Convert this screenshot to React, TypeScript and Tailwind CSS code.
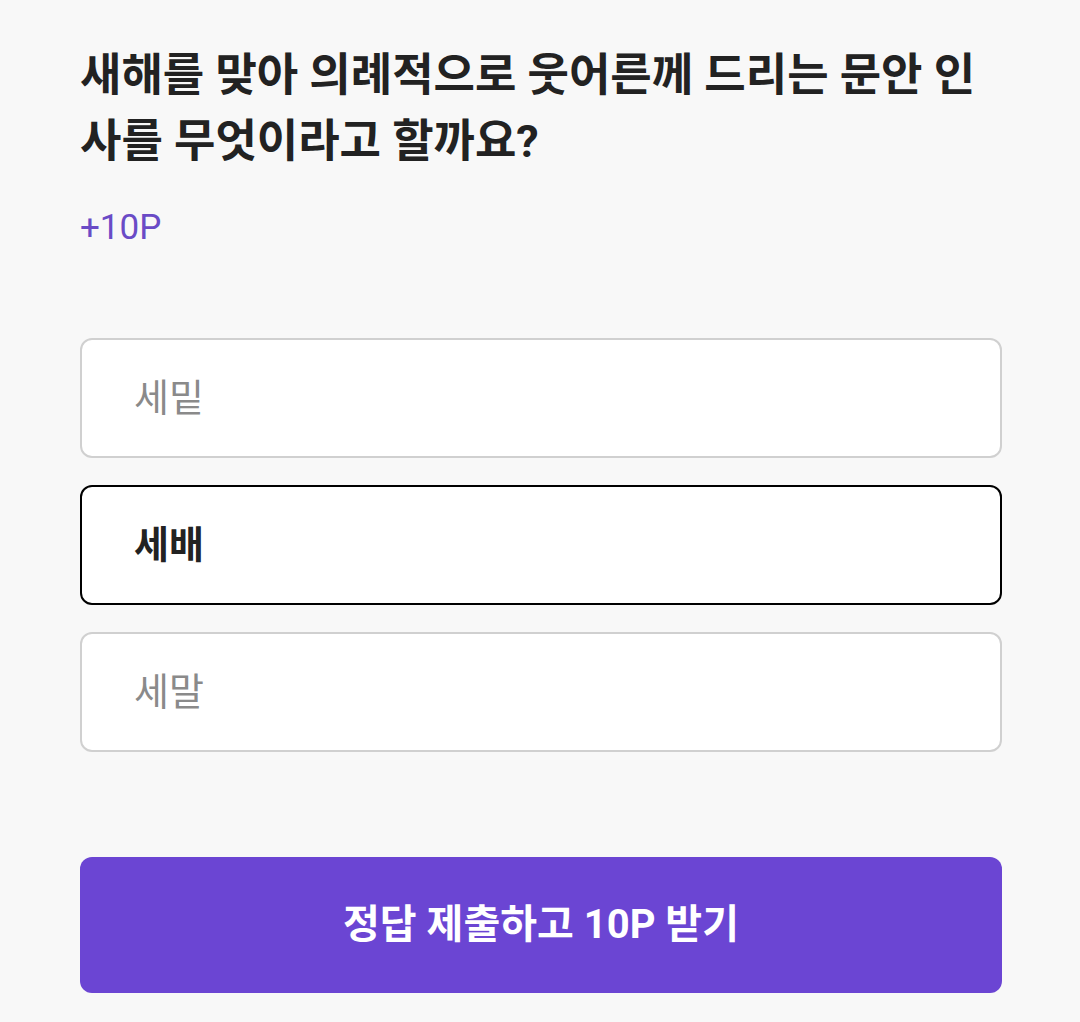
const options = [
  { label: "세밑", selected: false },
  { label: "세배", selected: true },
  { label: "세말", selected: false },
];

export default function App() {
  return (
    <div
      className="min-h-[1022px] bg-[#f8f8f8] pl-[80px] pr-[78px] pt-[43px] text-[#222222]"
      style={{ fontFamily: 'Roboto, "Noto Sans CJK KR", sans-serif' }}
    >
      <h1 className="text-[45px] font-bold leading-[66px]">
        새해를 맞아 의례적으로 웃어른께 드리는 문안 인사를 무엇이라고 할까요?
      </h1>
      <p className="mt-[28px] text-[35px] leading-[50px] text-[#6a4bc6]">+10P</p>

      <div className="mt-[85px] flex flex-col gap-[27px]">
        {options.map((o) => (
          <button
            key={o.label}
            className={
              o.selected
                ? "flex h-[120px] items-center rounded-[12px] border-2 border-black bg-white pl-[52px] text-left text-[38px] font-bold text-[#222222]"
                : "flex h-[120px] items-center rounded-[12px] border-2 border-[#d0d0d0] bg-white pl-[52px] text-left text-[38px] text-[#8a8a8a]"
            }
          >
            {o.label}
          </button>
        ))}
      </div>

      <button className="mt-[105px] flex h-[136px] w-full items-center justify-center rounded-[12px] bg-[#6b45d3] text-[40px] font-bold text-white">
        정답 제출하고 10P 받기
      </button>
    </div>
  );
}
